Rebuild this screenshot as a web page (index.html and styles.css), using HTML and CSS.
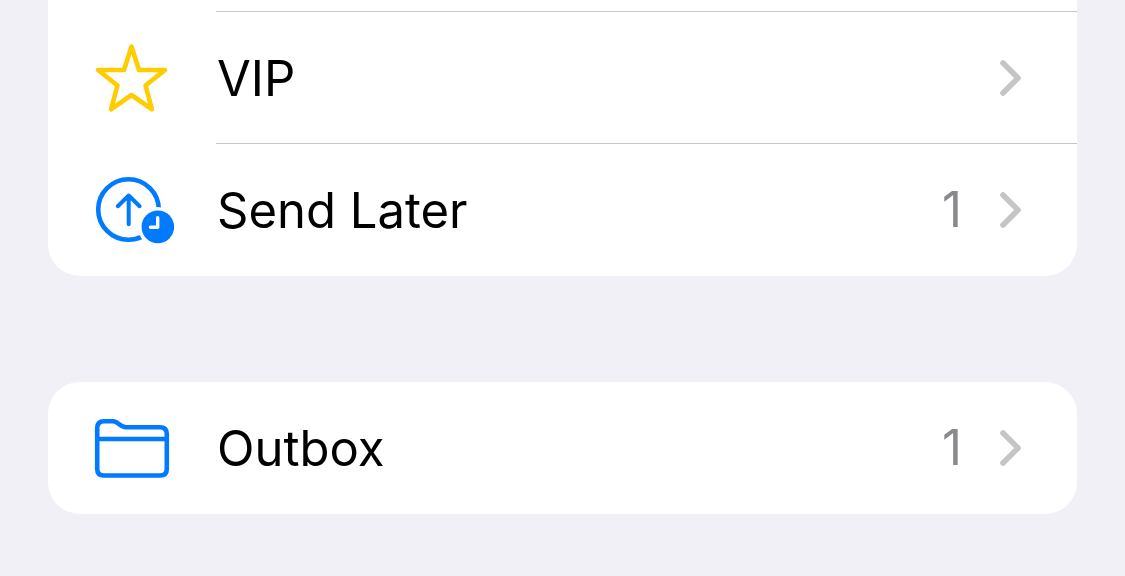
FILE: index.html
```html
<!DOCTYPE html>
<html lang="en">
<head>
    <meta charset="UTF-8">
    <meta name="viewport" content="width=device-width, initial-scale=1.0">
    <title>Mailboxes</title>
    <link rel="stylesheet" href="styles.css">
</head>
<body>

    <main class="mailboxes">
        <!-- list continues above the top of the window -->
        <ul class="card card-continued">
            <li>
                <a href="#vip" class="row">
                    <span class="row-icon">
                        <svg class="icon star" viewBox="0 0 84 84" aria-hidden="true">
                            <path d="M41.5 10.5L49 34L75 34L55.5 49.5L62 73.3L41.5 59L21 73.3L27.5 49.5L8 34L34 34Z"/>
                        </svg>
                    </span>
                    <span class="row-body">
                        <span class="row-label">VIP</span>
                        <svg class="chevron" viewBox="0 0 22 38" aria-hidden="true"><path d="M3 4L18 19L3 34"/></svg>
                    </span>
                </a>
            </li>
            <li>
                <a href="#send-later" class="row">
                    <span class="row-icon">
                        <svg class="icon" viewBox="0 0 84 84" aria-hidden="true">
                            <circle cx="38.5" cy="41.5" r="30.3"/>
                            <path d="M38.7 56.2V27.7M27.8 38.2L38.7 27.5L49.6 38.2" stroke-width="4"/>
                            <circle class="badge-gap" cx="67.9" cy="58.9" r="20"/>
                            <circle class="badge" cx="67.9" cy="58.9" r="16.3"/>
                            <path class="hands" d="M67.7 49.8V59.3H60.5"/>
                        </svg>
                    </span>
                    <span class="row-body">
                        <span class="row-label">Send Later</span>
                        <span class="row-count">1</span>
                        <svg class="chevron" viewBox="0 0 22 38" aria-hidden="true"><path d="M3 4L18 19L3 34"/></svg>
                    </span>
                </a>
            </li>
        </ul>

        <ul class="card">
            <li>
                <a href="#outbox" class="row">
                    <span class="row-icon">
                        <svg class="icon" viewBox="0 0 84 84" aria-hidden="true">
                            <path d="M7.2 22Q7.2 15.2 14 15.2H23C28 15.2 30 21.2 36 21.2H70Q76.8 21.2 76.8 28V62.7Q76.8 69.5 70 69.5H14Q7.2 69.5 7.2 62.7ZM7.2 33H76.8"/>
                        </svg>
                    </span>
                    <span class="row-body">
                        <span class="row-label">Outbox</span>
                        <span class="row-count">1</span>
                        <svg class="chevron" viewBox="0 0 22 38" aria-hidden="true"><path d="M3 4L18 19L3 34"/></svg>
                    </span>
                </a>
            </li>
        </ul>
    </main>

</body>
</html>
```
FILE: styles.css
```css
body {
    margin: 0;
    background-color: #f1f0f6;
    color: #000;
    font-family: Inter, "Liberation Sans", sans-serif;
    font-size: 49px;
    line-height: 60px;
}
.mailboxes {
    display: flex;
    flex-direction: column;
    gap: 106px;
    padding: 0 48px;
}
.card {
    list-style: none;
    margin: 0;
    padding: 0;
    background-color: #fff;
    border-radius: 32px;
}
.card-continued {
    padding-top: 12px;
    border-radius: 0 0 32px 32px;
}
.row {
    display: flex;
    color: inherit;
    text-decoration: none;
}
.row-icon {
    display: flex;
    align-items: center;
    justify-content: center;
    width: 168px;
}
.row-body {
    flex: 1;
    display: flex;
    align-items: center;
    padding: 35px 55px 35px 0;
}
/* separators start at the label, not under the icon */
.card-continued .row-body {
    box-shadow: 0 -1px #c6c6c8;
}
.row-label {
    flex: 1;
    padding: 2px 0 0 1px;
}
.row-count {
    color: #8a8a8e;
    margin-right: 38px;
}
.icon {
    width: 84px;
    height: 84px;
    fill: none;
    stroke: #007aff;
    stroke-width: 4.6;
    stroke-linecap: round;
    stroke-linejoin: round;
}
.star {
    stroke: #ffcc00;
}
.badge-gap {
    fill: #fff;
    stroke: none;
}
.badge {
    fill: #007aff;
    stroke: none;
}
.hands {
    stroke: #fff;
    stroke-width: 3.4;
}
.chevron {
    width: 22px;
    height: 38px;
    fill: none;
    stroke: #c5c5c7;
    stroke-width: 5.6;
    stroke-linecap: round;
    stroke-linejoin: round;
}
```
